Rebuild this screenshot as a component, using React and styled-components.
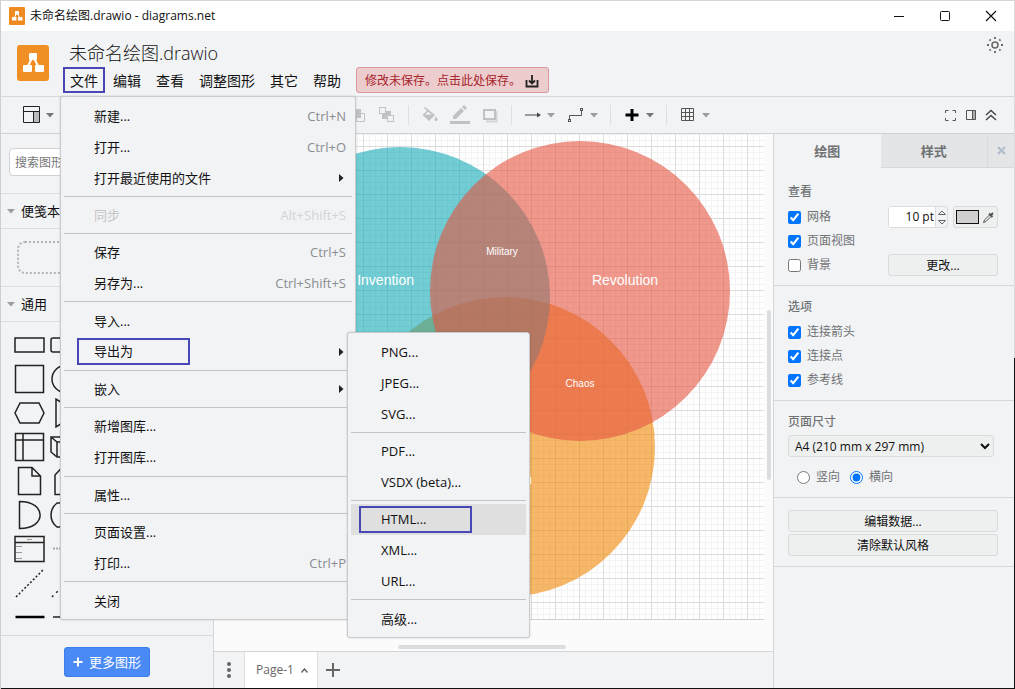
import React from "react";
import styled, { createGlobalStyle, css } from "styled-components";

const Global = createGlobalStyle`
  * { box-sizing: border-box; }
  body {
    margin: 0;
    font-family: "Open Sans", "Noto Sans CJK SC", sans-serif;
    font-size: 13px;
    line-height: 20px;
    color: #111;
  }
  button, input, select { font: inherit; color: inherit; margin: 0; }
  ul { list-style: none; margin: 0; padding: 0; }
  h1, h2 { margin: 0; font-weight: 400; }
  svg { display: block; flex: none; }
`;

const plainButton = css`
  border: 0;
  padding: 0;
  background: none;
  cursor: pointer;
`;

const Frame = styled.div`
  min-height: 100vh;
  display: flex;
  flex-direction: column;
  border-left: 1px solid #cdcfd1;
  padding: 0 1px 1px 0;
  background: linear-gradient(to bottom, #d9dbdc 52%, #111 52%);
`;

/* ---- title bar ---- */
const TitleBar = styled.div`
  display: flex;
  align-items: center;
  gap: 5px;
  height: 31px;
  padding: 0 15px 0 8px;
  border-top: 1px solid #d5d5d5;
  background: #fff;
  font-size: 12px;
`;
const WindowControls = styled.div`
  display: flex;
  gap: 30px;
  margin-left: auto;
`;
const IconButton = styled.button`
  ${plainButton}
  display: flex;
  align-items: center;
  justify-content: center;
`;

/* ---- header ---- */
const Header = styled.header`
  position: relative;
  display: flex;
  height: 65px;
  padding: 0 10px 0 16px;
  background: #f1f3f5;
`;
const Logo = styled.div`
  width: 32px;
  height: 36px;
  margin: 14px 14px 0 0;
  border-radius: 3px;
  background: #f08f24;
`;
const HeaderMain = styled.div`
  flex: 1;
  padding-top: 9px;
`;
const DocTitle = styled.h1`
  padding-left: 6px;
  font-size: 18px;
  font-weight: 300;
  line-height: 26px;
`;
const MenuBar = styled.nav`
  display: flex;
  gap: 1px;
  margin-top: 1px;
  align-items: center;
`;
const MenuSlot = styled.div`
  position: relative;
`;
const MenuButton = styled.button`
  ${plainButton}
  height: 26px;
  padding: 1px 5px 0;
  border: 2px solid ${(p) => (p.$active ? "#4747b5" : "transparent")};
  font-size: 14px;
  line-height: 20px;
  white-space: nowrap;
`;
const SaveNotice = styled.button`
  display: flex;
  align-items: center;
  gap: 4px;
  height: 26px;
  margin-left: 7px;
  padding: 2px 9px 0 8px;
  border: 1px solid #d9989b;
  border-radius: 3px;
  background: #eccccd;
  color: #a8232b;
  font-size: 12px;
`;
const ThemeButton = styled(IconButton)`
  align-self: flex-start;
  margin-top: 5px;
`;

/* ---- drop-down menus ---- */
const Menu = styled.ul`
  position: absolute;
  z-index: ${(p) => (p.$sub ? 3 : 2)};
  display: flex;
  flex-direction: column;
  padding: 3px;
  border: 1px solid #c8cacd;
  border-radius: 3px;
  background: #f1f3f5;
  box-shadow: 0 0 2px rgba(0, 0, 0, 0.2);
  ${(p) =>
    p.$sub
      ? "top: -4px; left: 283px; width: 183px; height: 306px;"
      : "top: 29px; left: -3px; width: 296px; height: 524px;"}
`;
const MenuItem = styled.li`
  position: relative;
  flex: none;
`;
const MenuDivider = styled.li`
  display: flex;
  flex: 1;
  align-items: center;
  &::after {
    content: "";
    flex: 1;
    height: 1px;
    background: #c3c5c8;
  }
`;
const ItemButton = styled.button`
  ${plainButton}
  display: flex;
  align-items: center;
  width: 100%;
  height: 31px;
  padding-right: 6px;
  text-align: left;
  background: ${(p) => (p.$hover ? "#dfdfe0" : "none")};
  color: ${(p) => (p.disabled ? "#c4c6c8" : "#111")};
`;
const ItemLabel = styled.span`
  margin-left: 30px;
  ${(p) =>
    p.$boxed &&
    css`
      width: 113px;
      height: 27px;
      line-height: 23px;
      border: 2px solid #4747b5;
      margin-left: ${p.$boxed}px;
      padding-left: ${28 - p.$boxed}px;
    `}
`;
const Shortcut = styled.span`
  margin-left: auto;
  color: ${(p) => (p.$off ? "#d2d4d6" : "#8b8d90")};
`;
const SubArrow = styled.svg`
  margin: 0 2px 0 auto;
`;

/* ---- toolbar ---- */
const Toolbar = styled.div`
  display: grid;
  grid-template-columns: 341px 1fr auto;
  height: 38px;
  border-top: 1px solid #d6d8da;
  border-bottom: 1px solid #cfd1d3;
  background: #f1f3f5;
`;
const ToolGroup = styled.div`
  display: flex;
  align-items: center;
`;
const LayoutButton = styled(IconButton)`
  gap: 5px;
  margin-left: 22px;
`;
const ToolButton = styled(IconButton)`
  width: 30px;
  height: 30px;
`;
const ToolDropdown = styled(IconButton)`
  width: 43px;
  height: 30px;
  gap: 5px;
`;
const ToolDivider = styled.span`
  width: 1px;
  height: 20px;
  margin: 0 6px;
  background: #dddfe1;
`;
const ViewTools = styled(ToolGroup)`
  gap: 8px;
  padding-right: 17px;
`;

/* ---- body ---- */
const Body = styled.div`
  flex: 1;
  display: grid;
  grid-template-columns: 213px minmax(0, 1fr) 241px;
`;
const Sidebar = styled.aside`
  display: flex;
  flex-direction: column;
  border-right: 1px solid #d3d5d7;
  background: #f1f3f5;
`;
const SearchRow = styled.div`
  height: 60px;
  padding: 14px 8px 0;
  border-bottom: 1px solid #dcdee0;
`;
const SearchInput = styled.input`
  width: 100%;
  height: 28px;
  padding: 0 5px;
  border: 1px solid #d0d2d4;
  border-radius: 4px;
  background: #fff;
  font-size: 12px;
  &::placeholder { color: #777; opacity: 1; }
`;
const SectionHeader = styled.button`
  ${plainButton}
  display: flex;
  align-items: center;
  gap: 6px;
  height: 35px;
  padding-left: 6px;
  border-bottom: 1px solid #dcdee0;
`;
const Scratchpad = styled.div`
  height: 58px;
  padding: 12px 16px;
  border-bottom: 1px solid #dcdee0;
`;
const DropZone = styled.div`
  height: 33px;
  border: 2px dotted #b3b5b7;
  border-radius: 8px;
`;
const ShapeGrid = styled.div`
  flex: 1;
  display: grid;
  grid-template-columns: 36px 36px;
  grid-auto-rows: 34px;
  align-content: start;
  padding: 6px 10px 0;
`;
const ShapeButton = styled(IconButton)`
  color: #222;
`;
const SidebarFooter = styled.div`
  display: flex;
  justify-content: center;
  height: 53px;
  padding-top: 11px;
  border-top: 1px solid #d6d8da;
`;
const MoreShapes = styled.button`
  display: flex;
  align-items: center;
  gap: 6px;
  height: 30px;
  padding: 0 8px;
  border: 1px solid #3b7ded;
  border-radius: 3px;
  background: #4a8af5;
  color: #fff;
`;

const Workspace = styled.main`
  display: flex;
  flex-direction: column;
  min-width: 0;
`;
const Canvas = styled.div`
  position: relative;
  flex: 1;
  overflow: hidden;
  background: #fbfbfb;
`;
const ScrollThumb = styled.span`
  position: absolute;
  border-radius: 2px;
  background: #dcdddf;
  ${(p) =>
    p.$vertical
      ? "right: 2px; top: 34%; width: 4px; height: 33%;"
      : "bottom: 2px; left: 33%; height: 4px; width: 30%;"}
`;
const PageBar = styled.div`
  display: flex;
  height: 37px;
  border-top: 1px solid #d3d5d7;
  background: #f1f3f5;
  color: #666;
`;
const PageMenu = styled(IconButton)`
  width: 31px;
  border-right: 1px solid #dcdee0;
`;
const PageTab = styled(IconButton)`
  gap: 7px;
  width: 73px;
  padding-left: 2px;
  border-right: 1px solid #dcdee0;
  background: #fff;
  font-size: 12px;
  white-space: nowrap;
`;
const AddPage = styled(IconButton)`
  width: 30px;
`;

/* ---- format panel ---- */
const Panel = styled.aside`
  border-left: 1px solid #d3d5d7;
  background: #f1f3f5;
  color: #707274;
  font-size: 12px;
`;
const PanelTabs = styled.div`
  display: grid;
  grid-template-columns: 1fr 1fr 27px;
  height: 34px;
`;
const PanelTab = styled.button`
  ${plainButton}
  font-size: 13px;
  font-weight: 700;
  background: ${(p) => (p.$off ? "#e4e5e6" : "none")};
  border-bottom: 1px solid ${(p) => (p.$off ? "#d6d8da" : "transparent")};
`;
const PanelClose = styled(IconButton)`
  border-left: 1px solid #d9dbdd;
  border-bottom: 1px solid #d6d8da;
  background: #e4e5e6;
`;
const PanelBody = styled.div`
  padding-top: 3px;
`;
const Section = styled.section`
  padding: 10px 16px 8px 14px;
  border-bottom: 1px solid #d6d8da;
`;
const SectionTitle = styled.h2`
  margin-bottom: 2px;
  font-size: 12px;
  font-weight: 500;
  line-height: 22px;
`;
const Row = styled.div`
  display: grid;
  grid-template-columns: 1fr 110px;
  align-items: center;
  height: 24px;
`;
const CheckLabel = styled.label`
  display: flex;
  align-items: center;
  gap: 6px;
  line-height: 22px;
  input {
    width: 13px;
    height: 13px;
    accent-color: #0075ff;
  }
`;
const GridControls = styled.div`
  display: flex;
  justify-content: space-between;
`;
const Stepper = styled.div`
  display: flex;
  width: 60px;
  height: 22px;
  border: 1px solid #dadcde;
  border-radius: 3px;
  background: #f1f3f5;
`;
const SizeInput = styled.input`
  width: 46px;
  padding: 0 1px;
  border: 0;
  background: #fff;
  color: #111;
  text-align: right;
`;
const StepButtons = styled.div`
  flex: 1;
  display: grid;
  border-left: 1px solid #dadcde;
`;
const PanelButton = styled.button`
  width: 100%;
  height: 22px;
  padding: 1px 0 0;
  border: 1px solid #d9dbdd;
  border-radius: 3px;
  background: #eeefef;
  color: #111;
  line-height: 18px;
`;
const ColorButton = styled(PanelButton)`
  display: flex;
  align-items: center;
  justify-content: center;
  gap: 3px;
  width: 45px;
  padding: 0;
`;
const Swatch = styled.span`
  width: 23px;
  height: 14px;
  border: 1px solid #111;
  background: #d0d0d0;
`;
const SizeSelect = styled.select`
  display: block;
  width: 206px;
  height: 22px;
  margin-bottom: 8px;
  padding: 0 2px;
  border: 1px solid #d9dbdd;
  border-radius: 3px;
  background: #eeefef;
  color: #111;
`;
const RadioRow = styled.div`
  display: flex;
  gap: 10px;
  height: 24px;
  padding-left: 9px;
`;
const ButtonSection = styled(Section)`
  display: grid;
  gap: 2px;
  padding-top: 12px;
  padding-bottom: 10px;
`;

const LogoMark = ({ w, h, tile }) => (
  <svg width={w} height={h} viewBox="0 0 32 36">
    {tile && <rect width="32" height="36" rx="2" fill="#ee8a20" />}
    <path d="M16 11 L10 23 M16 11 L22 23" stroke="#fff" strokeWidth="2" />
    <rect x="12" y="8" width="8" height="7" rx="1" fill="#fff" />
    <rect x="6" y="20" width="9" height="7" rx="1" fill="#fff" />
    <rect x="18" y="20" width="9" height="7" rx="1" fill="#fff" />
  </svg>
);

const Caret = ({ fill = "#9b9d9f" }) => (
  <svg width="8" height="5" viewBox="0 0 8 5">
    <path d="M0 0H8L4 4.5Z" fill={fill} />
  </svg>
);

const fileMenu = [
  { label: "新建...", keys: "Ctrl+N" },
  { label: "打开...", keys: "Ctrl+O" },
  { label: "打开最近使用的文件", arrow: true },
  null,
  { label: "同步", keys: "Alt+Shift+S", off: true },
  null,
  { label: "保存", keys: "Ctrl+S" },
  { label: "另存为...", keys: "Ctrl+Shift+S" },
  null,
  { label: "导入..." },
  {
    label: "导出为",
    arrow: true,
    boxed: 13,
    children: [
      { label: "PNG..." },
      { label: "JPEG..." },
      { label: "SVG..." },
      null,
      { label: "PDF..." },
      { label: "VSDX (beta)..." },
      null,
      { label: "HTML...", boxed: 8, hover: true },
      { label: "XML..." },
      { label: "URL..." },
      null,
      { label: "高级..." },
    ],
  },
  null,
  { label: "嵌入", arrow: true },
  null,
  { label: "新增图库..." },
  { label: "打开图库..." },
  null,
  { label: "属性..." },
  null,
  { label: "页面设置..." },
  { label: "打印...", keys: "Ctrl+P" },
  null,
  { label: "关闭" },
];

const MenuList = ({ items, sub }) => (
  <Menu $sub={sub}>
    {items.map((item, i) =>
      item ? (
        <MenuItem key={i}>
          <ItemButton disabled={item.off} $hover={item.hover}>
            <ItemLabel $boxed={item.boxed}>{item.label}</ItemLabel>
            {item.keys && <Shortcut $off={item.off}>{item.keys}</Shortcut>}
            {item.arrow && (
              <SubArrow width="5" height="8" viewBox="0 0 5 8">
                <path d="M0 0L4.500 4L0 8Z" fill="#222" />
              </SubArrow>
            )}
          </ItemButton>
          {item.children && <MenuList items={item.children} sub />}
        </MenuItem>
      ) : (
        <MenuDivider key={i} />
      )
    )}
  </Menu>
);

const shapes = [
  ["矩形", <rect x="1" y="8" width="29" height="14" />],
  ["圆角矩形", <rect x="1" y="8" width="29" height="14" rx="2" />],
  ["正方形", <rect x="1.500" y="1.500" width="28" height="27" />],
  ["圆形", <circle cx="15.500" cy="15" r="13.500" />],
  ["六边形", <path d="M6 5H25L30 15L25 25H6L1 15Z" />],
  ["三角形", <path d="M6 1V29L28 15Z" />],
  ["内部存储", <path d="M1.500 1.500H29.500V28.500H1.500ZM1.500 8H29.500M9 1.500V28.500" />],
  ["立方体", <path d="M1 5H24L30 10V25H7L1 20ZM1 5L7 10H30M7 10V25" />],
  ["便签", <path d="M4.500 1.500H18L26.500 10V28.500H4.500ZM18 1.500V10H26.500" />],
  ["卡片", <path d="M5 28.500V9L12 1.500H27V28.500Z" />],
  ["与门", <path d="M5.500 1.500C33 1.500 33 28.500 5.500 28.500Z" />],
  ["数据存储", <path d="M7 3H27C22 9 22 21 27 27H7C-1 21 -1 9 7 3Z" />],
  [
    "列表",
    <>
      <path d="M1 2.500H30V27.500H1ZM1 8.500H30" />
      <path d="M13 5.500H18M2 12.500H8M2 18.500H8M2 24.500H8" stroke="#999" strokeWidth="1" />
    </>,
  ],
  ["列表项", <path d="M3 14.500H14" stroke="#aaa" strokeWidth="2" strokeDasharray="2 1" />],
  ["虚线", <path d="M2 29L29 2" strokeDasharray="2 2" />],
  ["点线", <path d="M2 29L29 2" strokeDasharray="2 4" />],
  ["粗线", <path d="M1.500 15H30.500" stroke="#000" strokeWidth="2.500" />],
  ["连线", <path d="M3 15H30" />],
];

const Diagram = () => (
  <svg width="550" height="486" fontFamily="'Liberation Sans', sans-serif" fontSize="14" fill="#fff">
    <defs>
      <pattern id="grid" x="5" y="12" width="24" height="24" patternUnits="userSpaceOnUse">
        <path d="M6.500 0V24M12.500 0V24M18.500 0V24M0 6.500H24M0 12.500H24M0 18.500H24" stroke="#f3f3f3" />
        <path d="M0.500 0V24M0 0.500H24" stroke="#dcdcdc" />
      </pattern>
    </defs>
    <rect width="550" height="486" fill="#fff" />
    <rect width="550" height="486" fill="url(#grid)" />
    <path d="M0 485.500H550" stroke="#d0d0d0" />
    <circle cx="291" cy="313" r="150" fill="#f08705" fillOpacity="0.6" />
    <circle cx="186" cy="163" r="150" fill="#12aab5" fillOpacity="0.6" />
    <circle cx="366" cy="157" r="150" fill="#e6533f" fillOpacity="0.6" />
    <text x="200" y="151" textAnchor="end">Invention</text>
    <text x="411" y="151" textAnchor="middle">Revolution</text>
    <text x="318" y="350" textAnchor="end">Evolution</text>
    <text x="288" y="121" textAnchor="middle" fontSize="10">Military</text>
    <text x="366" y="253" textAnchor="middle" fontSize="10">Chaos</text>
  </svg>
);

const Check = ({ children, ...rest }) => (
  <CheckLabel>
    <input type="checkbox" {...rest} />
    {children}
  </CheckLabel>
);

export default function App() {
  return (
    <>
      <Global />
      <Frame>
        <TitleBar>
          <LogoMark w={16} h={18} tile />
          <span>未命名绘图.drawio - diagrams.net</span>
          <WindowControls>
            <IconButton aria-label="最小化">
              <svg width="16" height="16" fill="none" stroke="#111"><path d="M3 8.500H13" /></svg>
            </IconButton>
            <IconButton aria-label="最大化">
              <svg width="16" height="16" fill="none" stroke="#111"><rect x="3.500" y="3.500" width="9" height="9" rx="1" /></svg>
            </IconButton>
            <IconButton aria-label="关闭窗口">
              <svg width="16" height="16" fill="none" stroke="#111" strokeWidth="1.200"><path d="M3 3L13 13M13 3L3 13" /></svg>
            </IconButton>
          </WindowControls>
        </TitleBar>

        <Header>
          <Logo><LogoMark w={32} h={36} /></Logo>
          <HeaderMain>
            <DocTitle>未命名绘图.drawio</DocTitle>
            <MenuBar>
              <MenuSlot>
                <MenuButton $active>文件</MenuButton>
                <MenuList items={fileMenu} />
              </MenuSlot>
              {["编辑", "查看", "调整图形", "其它", "帮助"].map((name) => (
                <MenuButton key={name}>{name}</MenuButton>
              ))}
              <SaveNotice>
                修改未保存。点击此处保存。
                <svg width="14" height="14" fill="none" stroke="#222" strokeWidth="1.800">
                  <path d="M1.500 6V12.500H12.500V6M7 1V9M4 6.500L7 9.500L10 6.500" />
                </svg>
              </SaveNotice>
            </MenuBar>
          </HeaderMain>
          <ThemeButton aria-label="外观">
            <svg width="18" height="18" fill="none" stroke="#666" strokeWidth="1.500">
              <circle cx="9" cy="9" r="3" />
              <path strokeWidth="1.800" d="M9 1V3M9 15V17M1 9H3M15 9H17M3.500 3.500L4.700 4.700M13.300 13.300L14.500 14.500M3.500 14.500L4.700 13.300M13.300 4.700L14.500 3.500" />
            </svg>
          </ThemeButton>
        </Header>

        <Toolbar>
          <ToolGroup>
            <LayoutButton aria-label="视图">
              <svg width="18" height="18" fill="none" stroke="#222">
                <rect x="11" y="6" width="5" height="10" fill="#b9bbbd" stroke="none" />
                <path d="M0.500 0.500H16.500V16.500H0.500ZM0.500 5.500H16.500M10.500 5.500V16.500" />
              </svg>
              <Caret fill="#777" />
            </LayoutButton>
          </ToolGroup>
          <ToolGroup>
            <ToolButton aria-label="置于顶层">
              <svg width="18" height="18" fill="none" stroke="#c0c2c4">
                <path d="M10 7.500H16.500V15.500H8.500V12" /><rect x="3" y="3" width="10" height="9" fill="#c0c2c4" stroke="none" />
              </svg>
            </ToolButton>
            <ToolButton aria-label="置于底层">
              <svg width="18" height="18" fill="none" stroke="#c0c2c4">
                <path d="M4 5H13V13H4Z" fill="#c0c2c4" stroke="none" />
                <rect x="1.500" y="1.500" width="6" height="6" fill="#f1f3f5" /><rect x="9.500" y="9.500" width="6" height="6" fill="#f1f3f5" />
              </svg>
            </ToolButton>
            <ToolDivider />
            <ToolButton aria-label="填充颜色">
              <svg width="18" height="18" viewBox="0 0 18 18" fill="#bfc1c3">
                <path d="M3 2L4 1L14 9L8 15L1.500 9L6 4.700ZM7 5.700L4 8.500H11Z" fillRule="evenodd" />
                <path d="M15 10.500C18 14.500 16 15 15 15S12.500 14 15 10.500Z" />
              </svg>
            </ToolButton>
            <ToolButton aria-label="线条颜色">
              <svg width="22" height="20" viewBox="0 0 22 20" fill="#bfc1c3">
                <rect x="1" y="16" width="20" height="3" /><path d="M4 14V11L12 3L15 6L7 14ZM13 2L15 0L18 3L16 5Z" />
              </svg>
            </ToolButton>
            <ToolButton aria-label="阴影">
              <svg width="16" height="16" fill="none" stroke="#bfc1c3" strokeWidth="2">
                <path d="M14.500 4V14.500H4" stroke="#d3d5d7" /><rect x="2" y="3" width="11" height="9" />
              </svg>
            </ToolButton>
            <ToolDivider />
            <ToolDropdown aria-label="连接">
              <svg width="18" height="18" fill="#444"><path d="M1 8.500H14V9.500H1ZM13 6.500L17 9L13 11.500Z" /></svg>
              <Caret />
            </ToolDropdown>
            <ToolDropdown aria-label="航点">
              <svg width="18" height="18" fill="none" stroke="#555">
                <rect x="1.500" y="13.500" width="2" height="2" /><rect x="13.500" y="2.500" width="2" height="2" /><path d="M2.500 13V9.500H14.500V5" />
              </svg>
              <Caret />
            </ToolDropdown>
            <ToolDivider />
            <ToolDropdown aria-label="插入">
              <svg width="18" height="18"><path d="M9 3V15M2.500 9H15.500" stroke="#000" strokeWidth="3" /></svg>
              <Caret fill="#777" />
            </ToolDropdown>
            <ToolDivider />
            <ToolDropdown aria-label="表格">
              <svg width="18" height="18" fill="none" stroke="#555">
                <path d="M2.500 2.500H14.500V14.500H2.500ZM6.500 2.500V14.500M10.500 2.500V14.500M2.500 6.500H14.500M2.500 10.500H14.500" />
              </svg>
              <Caret />
            </ToolDropdown>
          </ToolGroup>
          <ViewTools>
            <IconButton aria-label="全屏">
              <svg width="13" height="13" fill="none" stroke="#555">
                <path d="M1.500 4V1.500H4.500M8.500 1.500H11.500V4M11.500 9V11.500H8.500M4.500 11.500H1.500V9" />
              </svg>
            </IconButton>
            <IconButton aria-label="格式面板">
              <svg width="12" height="12" fill="none" stroke="#555">
                <rect x="7" y="1" width="4" height="10" fill="#aaa" stroke="none" /><path d="M1.500 1.500H10.500V10.500H1.500ZM7.500 1V11" />
              </svg>
            </IconButton>
            <IconButton aria-label="折叠">
              <svg width="12" height="12" fill="none" stroke="#444" strokeWidth="1.400"><path d="M1 6L6 1.500L11 6M1 11L6 6.500L11 11" /></svg>
            </IconButton>
          </ViewTools>
        </Toolbar>

        <Body>
          <Sidebar>
            <SearchRow><SearchInput aria-label="搜索图形" placeholder="搜索图形" /></SearchRow>
            <SectionHeader><Caret />便笺本</SectionHeader>
            <Scratchpad><DropZone /></Scratchpad>
            <SectionHeader><Caret />通用</SectionHeader>
            <ShapeGrid>
              {shapes.map(([name, drawing]) => (
                <ShapeButton key={name} aria-label={name}>
                  <svg width="31" height="30" fill="none" stroke="currentColor" strokeWidth="1.500">{drawing}</svg>
                </ShapeButton>
              ))}
            </ShapeGrid>
            <SidebarFooter>
              <MoreShapes>
                <svg width="10" height="10"><path d="M5 0.500V9.500M0.500 5H9.500" stroke="#fff" strokeWidth="2" /></svg>
                更多图形
              </MoreShapes>
            </SidebarFooter>
          </Sidebar>

          <Workspace>
            <Canvas>
              <Diagram />
              <ScrollThumb $vertical />
              <ScrollThumb />
            </Canvas>
            <PageBar>
              <PageMenu aria-label="页面">
                <svg width="4" height="16" fill="#666"><circle cx="2" cy="2" r="2" /><circle cx="2" cy="8" r="2" /><circle cx="2" cy="14" r="2" /></svg>
              </PageMenu>
              <PageTab>
                Page-1
                <svg width="7" height="5" fill="none" stroke="#666" strokeWidth="1.500"><path d="M0.500 4.500L3.500 1L6.500 4.500" /></svg>
              </PageTab>
              <AddPage aria-label="插入页面">
                <svg width="14" height="14"><path d="M7 0V14M0 7H14" stroke="#666" strokeWidth="2" /></svg>
              </AddPage>
            </PageBar>
          </Workspace>

          <Panel>
            <PanelTabs>
              <PanelTab>绘图</PanelTab>
              <PanelTab $off>样式</PanelTab>
              <PanelClose aria-label="隐藏">
                <svg width="9" height="9"><path d="M1 1L8 8M8 1L1 8" stroke="#b0bccb" strokeWidth="2" /></svg>
              </PanelClose>
            </PanelTabs>
            <PanelBody>
              <Section>
                <SectionTitle>查看</SectionTitle>
                <Row>
                  <Check defaultChecked>网格</Check>
                  <GridControls>
                    <Stepper>
                      <SizeInput aria-label="网格大小" defaultValue="10 pt" />
                      <StepButtons>
                        <IconButton aria-label="增大"><svg width="8" height="5" fill="none" stroke="#666"><path d="M0.500 4.500H7.500L4 1Z" /></svg></IconButton>
                        <IconButton aria-label="减小"><svg width="8" height="5" fill="none" stroke="#666"><path d="M0.500 0.500H7.500L4 4Z" /></svg></IconButton>
                      </StepButtons>
                    </Stepper>
                    <ColorButton aria-label="网格颜色">
                      <Swatch />
                      <svg width="13" height="13" fill="none" stroke="#555">
                        <path d="M1.500 11.500L2.500 9L8 3.500L9.500 5L4 10.500Z" /><path d="M7 2.500L10.500 6M9 4L11 2" strokeWidth="2" />
                      </svg>
                    </ColorButton>
                  </GridControls>
                </Row>
                <Row><Check defaultChecked>页面视图</Check></Row>
                <Row><Check>背景</Check><PanelButton>更改...</PanelButton></Row>
              </Section>
              <Section>
                <SectionTitle>选项</SectionTitle>
                <Row><Check defaultChecked>连接箭头</Check></Row>
                <Row><Check defaultChecked>连接点</Check></Row>
                <Row><Check defaultChecked>参考线</Check></Row>
              </Section>
              <Section>
                <SectionTitle>页面尺寸</SectionTitle>
                <SizeSelect aria-label="页面尺寸"><option>A4 (210 mm x 297 mm)</option></SizeSelect>
                <RadioRow>
                  <CheckLabel><input type="radio" name="orientation" />竖向</CheckLabel>
                  <CheckLabel><input type="radio" name="orientation" defaultChecked />横向</CheckLabel>
                </RadioRow>
              </Section>
              <ButtonSection>
                <PanelButton>编辑数据...</PanelButton>
                <PanelButton>清除默认风格</PanelButton>
              </ButtonSection>
            </PanelBody>
          </Panel>
        </Body>
      </Frame>
    </>
  );
}
